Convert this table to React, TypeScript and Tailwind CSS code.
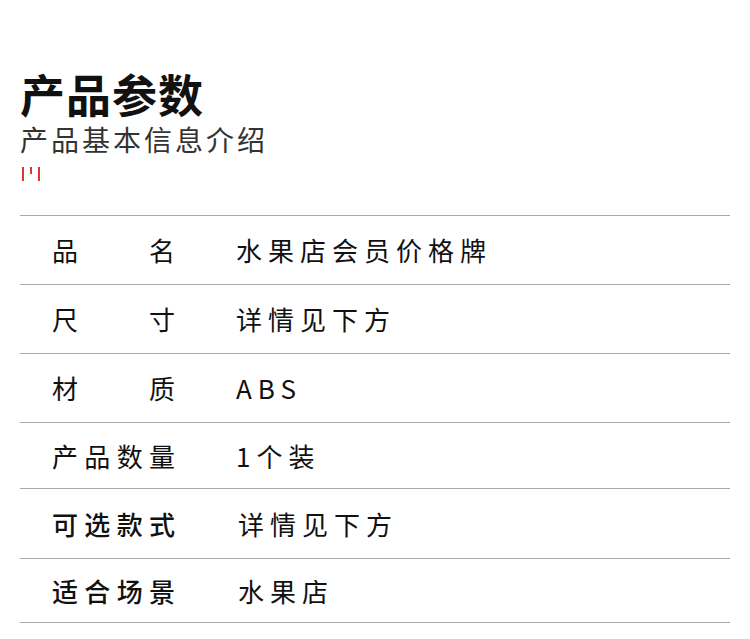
import React from "react";

const rows: { label: string[]; value: string; h: string; bold?: boolean; vx?: string }[] = [
  { label: ["品", "名"], value: "水果店会员价格牌", h: "h-[69px]" },
  { label: ["尺", "寸"], value: "详情见下方", h: "h-[69px]" },
  { label: ["材", "质"], value: "ABS", h: "h-[69px]" },
  { label: ["产", "品", "数", "量"], value: "1个装", h: "h-[66px]" },
  { label: ["可", "选", "款", "式"], value: "详情见下方", h: "h-[70px]", bold: true, vx: "pl-[2px]" },
  { label: ["适", "合", "场", "景"], value: "水果店", h: "h-[64px]", bold: true, vx: "pl-[2px]" },
];

export default function App() {
  return (
    <div
      className="w-[750px] h-[639px] bg-white overflow-hidden"
      style={{ fontFamily: '"Noto Sans CJK SC", "Noto Sans", sans-serif' }}
    >
      <div className="pt-[71px] pl-[20px]">
        <div className="text-[45px] leading-[46px] font-bold text-[#111] tracking-[1px]">产品参数</div>
        <div className="text-[28px] leading-[34px] text-[#333] tracking-[3px] mt-[5px]">产品基本信息介绍</div>
        <div className="flex items-start gap-[6px] mt-[11px] ml-[2px] h-[14px]">
          <div className="w-[2px] h-[14px] bg-[#d63a2c]" />
          <div className="w-[2px] h-[7px] bg-[#d63a2c]" />
          <div className="w-[2px] h-[14px] bg-[#d63a2c]" />
        </div>
      </div>
      <div className="ml-[20px] w-[710px] mt-[34px] border-t border-[#a8a8a8]">
        {rows.map((r, i) => (
          <div key={i} className={`flex items-center ${r.h} border-b border-[#a8a8a8]`}>
            <div className="pl-[32px] w-[216px]">
              <div
                className={`flex justify-between w-[123px] text-[26px] leading-none text-[#111] ${r.bold ? "font-medium" : "font-normal"}`}
              >
                {r.label.map((c, j) => (
                  <span key={j}>{c}</span>
                ))}
              </div>
            </div>
            <div className={`text-[26px] leading-none text-[#111] font-normal tracking-[6px] ${r.vx ?? ""}`}>{r.value}</div>
          </div>
        ))}
      </div>
    </div>
  );
}
